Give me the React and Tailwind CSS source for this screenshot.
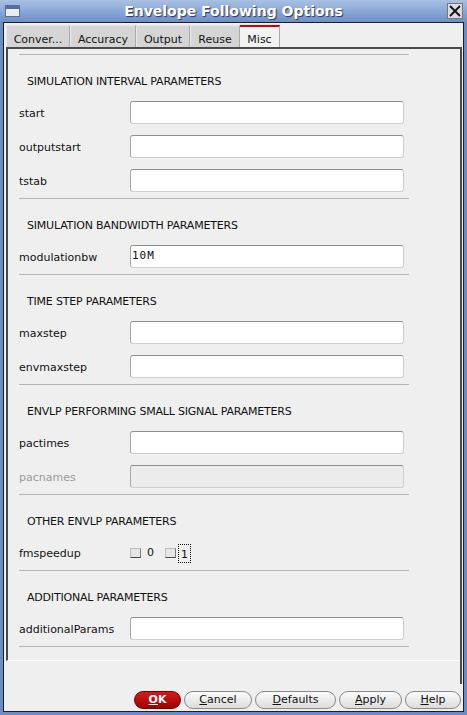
import React from 'react';

const sections = [
    { title: 'SIMULATION INTERVAL PARAMETERS', rows: [{ label: 'start' }, { label: 'outputstart' }, { label: 'tstab' }] },
    { title: 'SIMULATION BANDWIDTH PARAMETERS', rows: [{ label: 'modulationbw', value: '10M' }] },
    { title: 'TIME STEP PARAMETERS', rows: [{ label: 'maxstep' }, { label: 'envmaxstep' }] },
    { title: 'ENVLP PERFORMING SMALL SIGNAL PARAMETERS', rows: [{ label: 'pactimes' }, { label: 'pacnames', disabled: true }] },
    { title: 'OTHER ENVLP PARAMETERS', rows: [{ label: 'fmspeedup', radio: true }] },
    { title: 'ADDITIONAL PARAMETERS', rows: [{ label: 'additionalParams' }] },
];

const tabs = [
    { name: 'Conver...', w: 'w-[64px]' },
    { name: 'Accuracy', w: 'w-[66px]' },
    { name: 'Output', w: 'w-[54px]' },
    { name: 'Reuse', w: 'w-[50px]' },
    { name: 'Misc', w: 'w-[40px]', active: true },
];

function Check() {
    return <span className="block w-[11px] h-[10px] bg-[#e6e6e6] border border-[#bdbdbd] border-b-[#4a4a4a] border-r-[#7a7a7a]" />;
}

function Row({ row }) {
    return (
        <div className="flex items-center h-[23px]">
            <div className={`w-[111px] pt-[3px] ${row.disabled ? 'text-[#9a9a9a]' : 'text-[#111]'}`}>{row.label}</div>
            {row.radio ? (
                <div className="flex items-center text-[#111] pt-[1px]">
                    <Check />
                    <span className="ml-[6px] mr-[11px] pt-[1px]">0</span>
                    <Check />
                    <span className="ml-[2px] px-[2px] h-[19px] leading-[20px] border border-dotted border-[#111]">1</span>
                </div>
            ) : (
                <div
                    className={`w-[274px] h-[23px] rounded-[3px] border border-[#cfcfcf] border-t-[#8e8e8e] border-l-[#a8a8a8] px-[1px] flex items-center ${row.disabled ? 'bg-[#ececec]' : 'bg-white'}`}
                >
                    {row.value && <span className="font-['DejaVu_Sans_Mono'] text-[11px] tracking-[1px] text-[#111]">{row.value}</span>}
                </div>
            )}
        </div>
    );
}

function Btn({ children, red, w }) {
    return (
        <button
            className={`${w} h-[18px] rounded-full text-[11px] flex items-center justify-center border ${
                red
                    ? 'bg-gradient-to-b from-[#d41a1a] to-[#a00000] border-[#700] text-white font-bold'
                    : 'bg-gradient-to-b from-[#fbfbfb] to-[#dcdcdc] border-[#8a8a8a] text-[#111]'
            }`}
        >
            {children}
        </button>
    );
}

export default function App() {
    return (
        <div className="w-[467px] h-[715px] bg-[#6b8dc5] flex flex-col font-['DejaVu_Sans',sans-serif] text-[11px] overflow-hidden">
            {/* title bar */}
            <div className="h-[22px] relative flex items-center justify-center bg-gradient-to-b from-[#a8c0e5] to-[#6e90c7]">
                <div className="absolute left-[5px] top-[5px] w-[15px] h-[12px] border border-[#5a6f93] bg-[#e8ecea]">
                    <div className="h-[3px] bg-[#4f6fa8]" />
                </div>
                <span className="text-white font-bold text-[14px] [text-shadow:1px_1px_1px_#2a3a5a]">Envelope Following Options</span>
                <div className="absolute right-[4px] top-[3px] w-[16px] h-[16px] bg-[#dcdcdc] border border-[#777] flex items-center justify-center">
                    <svg width="12" height="12" viewBox="0 0 12 12">
                        <path d="M1 1L11 11M11 1L1 11" stroke="#111" strokeWidth="1.8" />
                    </svg>
                </div>
            </div>

            {/* frame */}
            <div className="flex-1 mx-[3px] mb-[3px] bg-[#efefef] border border-[#1e1e1e] flex flex-col">
                {/* tabs */}
                <div className="flex pt-[2px] pl-[2px] h-[24px]">
                    {tabs.map((t) => (
                        <div
                            key={t.name}
                            className={`${t.w} h-[22px] pt-[7px] flex items-center justify-center border-r border-[#a9a9a9] ${
                                t.active ? 'bg-[#f2f2f2] border-t-2 border-t-[#d40000]' : 'bg-[#d5d5d5] border-t border-t-[#e2e2e2] border-l border-l-[#e8e8e8]'
                            } text-[#111]`}
                        >
                            {t.name}
                        </div>
                    ))}
                </div>

                {/* panel */}
                <div className="ml-[2px] mr-[1px] h-[637px] border-t-2 border-r-2 border-[#4a4a4a] flex flex-col">
                    <div className="h-[612px] border-l-2 border-[#4a4a4a] border-b border-b-white pt-[5px] pl-[11px]">
                        {sections.map((s) => (
                            <div key={s.title}>
                                <div className="w-[390px] h-px bg-[#b4b4b4]" />
                                <div className="h-[46px] pt-[9px] pl-[8px] flex items-center text-[#111] tracking-[-0.2px]">{s.title}</div>
                                <div className="flex flex-col gap-[11px]">
                                    {s.rows.map((r) => (
                                        <Row key={r.label} row={r} />
                                    ))}
                                </div>
                                <div className="h-[6px]" />
                            </div>
                        ))}
                        <div className="w-[390px] h-px bg-[#b4b4b4]" />
                    </div>
                </div>

                {/* buttons */}
                <div className="flex justify-end gap-[3px] pr-[2px] mt-[7px]">
                    <Btn red w="w-[47px]"><span className="underline">O</span>K</Btn>
                    <Btn w="w-[68px]"><span className="underline">C</span>ancel</Btn>
                    <Btn w="w-[81px]"><span className="underline">D</span>efaults</Btn>
                    <Btn w="w-[63px]"><span className="underline">A</span>pply</Btn>
                    <Btn w="w-[56px]"><span className="underline">H</span>elp</Btn>
                </div>
            </div>
        </div>
    );
}
